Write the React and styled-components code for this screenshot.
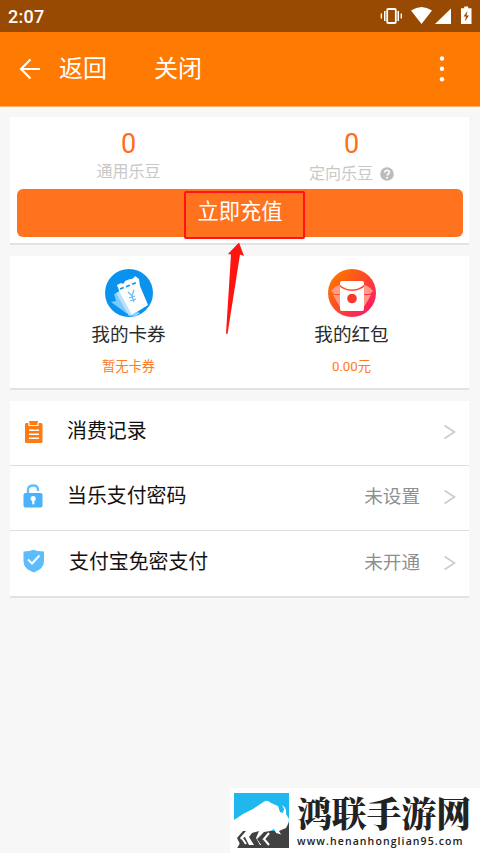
import React from "react";
import styled, { createGlobalStyle } from "styled-components";

const GlobalStyle = createGlobalStyle`
    * {
        box-sizing: border-box;
    }
    body {
        margin: 0;
        background-color: #f7f7f7;
        font-family: Roboto, "Noto Sans CJK SC", sans-serif;
    }
`;

const PageWrapper = styled('div')`
    position: relative;
    width: 480px;
    height: 853px;
    overflow: hidden;
    background-color: #f7f7f7;
`;

const StatusBar = styled('div')`
    display: flex;
    align-items: center;
    justify-content: space-between;
    height: 32px;
    padding: 0 8px;
    color: #fff;
    background-color: #984a02;
    font-size: 18px;
    font-weight: 500;
    letter-spacing: 0.3px;
`;

const StatusIcons = styled('svg')`
    display: block;
    margin-right: -8px;
`;

const Header = styled('header')`
    display: flex;
    align-items: center;
    height: 75px;
    padding: 0 30px 0 19px;
    color: #fff;
    background-color: #ff7a00;
    border-bottom: 1px solid #ffb066;
`;

const HeaderLink = styled('span')`
    font-size: 24px;
    line-height: 36px;
    margin-left: ${props => props.$gap}px;
`;

const MoreIcon = styled('svg')`
    margin-left: auto;
`;

const Content = styled('main')`
    display: flex;
    flex-direction: column;
    gap: 11px;
    padding: 10px 11px 0 10px;
`;

const Card = styled('section')`
    background-color: #fff;
    border-bottom: 2px solid #e2e2e2;
`;

const BalanceCard = styled(Card)`
    height: 128px;
    padding: 0 6px 0 7px;
`;

const Columns = styled('div')`
    display: grid;
    grid-template-columns: 1fr 1fr;
`;

const Balance = styled('div')`
    display: flex;
    flex-direction: column;
    align-items: center;
    height: 72px;
    padding-top: 11px;
`;

const BalanceValue = styled('span')`
    color: #ff6d1b;
    font-size: 27px;
    line-height: 32px;
`;

const BalanceLabel = styled('span')`
    display: flex;
    align-items: center;
    gap: 7px;
    margin-top: ${props => props.$offset || 0}px;
    color: #c8c8c8;
    font-size: 16px;
    line-height: 24px;
`;

const RechargeButton = styled('button')`
    position: relative;
    display: block;
    width: 100%;
    height: 48px;
    padding: 0 0 2px;
    border: unset;
    border-radius: 6px;
    color: #fff;
    background-color: #ff731f;
    font-family: inherit;
    font-size: 21.3px;
    line-height: 46px;
`;

const HighlightBox = styled('span')`
    position: absolute;
    left: 167px;
    top: 2px;
    width: 121px;
    height: 48px;
    border: 2px solid #ff1313;
    border-radius: 2px;
`;

const HighlightArrow = styled('svg')`
    position: absolute;
    left: 222px;
    top: 240px;
`;

const AssetCard = styled(Card)`
    height: 134px;
    padding: 0 6px 0 7px;
`;

const Asset = styled('div')`
    display: flex;
    flex-direction: column;
    align-items: center;
    padding-top: 13px;
`;

const AssetName = styled('span')`
    margin-top: 4px;
    color: #2b2b2b;
    font-size: 18.6px;
    line-height: 28px;
`;

const AssetValue = styled('span')`
    margin-top: 8px;
    color: #ff7a22;
    font-size: 13.3px;
    line-height: 20px;
`;

const Row = styled('div')`
    display: flex;
    align-items: center;
    height: 65px;
    padding: 0 13px 2px 12px;
    border-bottom: ${props => props.$last ? "0" : "1px solid #dedede"};
`;

const RowIcon = styled('svg')`
    flex: none;
    margin-top: ${props => props.$shift || 0}px;
`;

const RowTitle = styled('span')`
    margin-left: ${props => props.$gap}px;
    color: #111;
    font-size: 19.9px;
    line-height: 30px;
`;

const RowStatus = styled('span')`
    margin-left: auto;
    margin-right: 23px;
    color: #8f8f8f;
    font-size: 18.6px;
    line-height: 28px;
`;

const Chevron = styled('svg')`
    flex: none;
    margin-left: ${props => props.$push ? "auto" : "0"};
`;

const Watermark = styled('div')`
    position: absolute;
    right: 0;
    bottom: 0;
    display: flex;
    width: 250px;
    height: 65px;
    padding: 5px 0 0 4px;
    background-color: #fff;
`;

const WatermarkText = styled('div')`
    display: flex;
    flex-direction: column;
    margin-left: 8px;
    color: #222;
    white-space: nowrap;
`;

const WatermarkName = styled('span')`
    font-family: "Noto Serif CJK SC", "Noto Sans CJK SC", serif;
    font-size: 34.8px;
    font-weight: 900;
    line-height: 40px;
    margin-top: -1px;
`;

const WatermarkUrl = styled('span')`
    font-family: "Open Sans", sans-serif;
    font-size: 10.5px;
    font-weight: 600;
    line-height: 14px;
    letter-spacing: 1.1px;
    margin-top: 2px;
`;

const PhoneStatusIcons = () => (
    <StatusIcons width="104" height="32" viewBox="376 0 104 32" fill="#fff">
        <rect x="387.2" y="9" width="8.6" height="14" rx="1" fill="none" stroke="#fff" strokeWidth="1.8" />
        <path d="M384 11h1.5v10H384zM397.5 11h1.5v10h-1.5zM380.7 13.5h1.4v5h-1.4zM400.6 13.5h1.4v5h-1.4z" />
        <path d="M411 10.5Q421.500 3.500 432 10.500L421.500 24Z" />
        <path d="M451 8.500V24H435Z" />
        <path d="M464.200 6.500h4v1.800h3.300V24h-10.500V8.300h3.200z" />
        <path d="M467.500 11l-4 5.500h2.500l-1.200 5 4.200-6h-2.500z" fill="#984a02" />
    </StatusIcons>
);

const HelpIcon = () => (
    <svg width="14" height="14" viewBox="0 0 14 14">
        <circle cx="7" cy="7" r="6.800" fill="#bcbcbc" />
        <path d="M4.700 5.500C4.700 2.500 9.500 2.700 9.300 5.500 9.200 7 7.100 7 7.100 8.600" fill="none" stroke="#fff" strokeWidth="1.600" />
        <circle cx="7.100" cy="10.700" r="1" fill="#fff" />
    </svg>
);

const CouponIcon = () => (
    <svg width="48" height="48" viewBox="0 0 48 48">
        <circle cx="24" cy="24" r="24" fill="#0992ee" />
        <path d="M6 33l5-1-2-7 6-2-1-6 5 3 9 27-7-3z" fill="#7dcaff" />
        <path d="M11 24l7-4 10 26-4 1z" fill="#b7e1ff" />
        <path d="M12 16l4-2q3 2 4-2l5-2q3 1 5-3l4 3 1 7 8 19-16 10-12-22z" fill="#fff" />
        <path d="M15 20l18-7" stroke="#0992ee" strokeWidth="1.600" strokeDasharray="4 2.500" />
        <path d="M23 23l4 4 2-6M27 27l2 6M24 29l6-2M25 32l6-2" fill="none" stroke="#62bdf6" strokeWidth="1.200" />
        <path d="M27 46l5-3 3 1-5 4z" fill="#8fd0ff" />
    </svg>
);

const RedPacketIcon = () => (
    <svg width="48" height="48" viewBox="0 0 48 48">
        <defs>
            <linearGradient id="packet" x1="0.100" y1="0.200" x2="0.850" y2="0.850">
                <stop offset="0" stopColor="#ff7200" />
                <stop offset="0.500" stopColor="#fa4a2a" />
                <stop offset="1" stopColor="#ff1d5e" />
            </linearGradient>
        </defs>
        <circle cx="24" cy="24" r="24" fill="url(#packet)" />
        <path d="M3 22q4-5 9-6v9H6zM45 22q-4-5-9-6v9h6zM5 26h7v12zM43 26h-7v12z" fill="#ff9a86" />
        <path d="M12 14q0-2 2-2h20q2 0 2 2v2q-12 9-24 0z" fill="#fff" />
        <path d="M12 18q12 8 24 0v22q0 2-2 2H14q-2 0-2-2z" fill="#fff" />
        <circle cx="24" cy="29.500" r="4.800" fill="#f8382f" />
    </svg>
);

const RecordIcon = () => (
    <RowIcon width="22" height="24" viewBox="0 0 22 24">
        <path d="M4 3h3V1h9v2h3q1.500 0 1.500 1.500V21.500q0 1.500-1.500 1.500H4q-1 0-1-1.500V4.500Q3 3 4 3z" fill="#ff7a10" />
        <path d="M7 2.500v3h9v-3" fill="none" stroke="#fff" strokeWidth="1.200" />
        <path d="M7 10.200h10M7 14.300h10M7 18.300h10" stroke="#fff" strokeWidth="1.600" />
    </RowIcon>
);

const LockIcon = () => (
    <RowIcon width="22" height="24" viewBox="0 0 22 24" $shift={-3}>
        <path d="M6 10V5.500Q6 1.500 11.500 1.500 16 1.500 16 6v1" fill="none" stroke="#62bffb" strokeWidth="2.400" />
        <rect x="1.500" y="9" width="19" height="14.500" rx="2" fill="#49b2fb" />
        <circle cx="11.200" cy="14.500" r="2.600" fill="#fff" />
        <rect x="10.200" y="15" width="2.200" height="5.500" rx="1" fill="#fff" />
    </RowIcon>
);

const ShieldIcon = () => (
    <RowIcon width="22" height="24" viewBox="0 0 22 24" $shift={-4}>
        <path d="M1.500 2.500Q8 2.500 11.700 0.800 15 2.500 22 2.500V12q0 8-10.200 11.500Q1.500 20 1.500 12z" fill="#5dbcfc" />
        <path d="M6 10.500l4 4 7.500-8" fill="none" stroke="#fff" strokeWidth="2" />
    </RowIcon>
);

const ChevronIcon = ({push}) => (
    <Chevron width="13" height="16" viewBox="0 0 13 16" $push={push}>
        <path d="M1.500 1.500L11.500 8 1.500 14.500" fill="none" stroke="#ccc" strokeWidth="1.700" />
    </Chevron>
);

const BisonLogo = () => (
    <svg width="55" height="55" viewBox="0 0 55 55">
        <rect width="55" height="55" fill="#20b6ee" />
        <path d="M0 38h55v17H0z" fill="#414141" />
        <path d="M0 27l9-6 10-5 12-8q3-1 6 2l7 3 2 6 3 1 1-4-2-4q5 3 4 9l3 5-1 8-3 4-2 4-7-2-2-4-4 2-6 1-2 6 3 7h-5l-4-7 3-7-7 2-3 4 5 8h-5l-4-8-3 1-3 7-3 5-2-2z" fill="#fff" />
        <path d="M45 38l7-3 3-6v26H36l-3-7 4-8 3-2 5 5h3z" fill="#414141" />
        <path d="M9 38l-6 7 3 6h4l-4-6 6-7zM30 39l-7 7 5 7h5l-5-7 7-7z" fill="#414141" />
        <path d="M12 40l-4 5 4 6M35 40l-5 6 5 6" fill="none" stroke="#fff" strokeWidth="2" />
    </svg>
);

const rows = [
    {title: "消费记录", gap: 33, icon: <RecordIcon />},
    {title: "当乐支付密码", gap: 33, icon: <LockIcon />, status: "未设置"},
    {title: "支付宝免密支付", gap: 35, icon: <ShieldIcon />, status: "未开通"},
];

const App = () => (
    <PageWrapper>
        <GlobalStyle />
        <StatusBar>
            <span>2:07</span>
            <PhoneStatusIcons />
        </StatusBar>
        <Header>
            <svg width="22" height="22" viewBox="0 0 22 22" fill="none" stroke="#fff" strokeWidth="2.200">
                <path d="M21 11H2M11.500 1.500L2 11l9.500 9.500" />
            </svg>
            <HeaderLink $gap={18}>返回</HeaderLink>
            <HeaderLink $gap={47}>关闭</HeaderLink>
            <MoreIcon width="16" height="26" viewBox="0 0 16 26" fill="#fff">
                <circle cx="8" cy="2.500" r="2.200" />
                <circle cx="8" cy="12.800" r="2.200" />
                <circle cx="8" cy="23.300" r="2.200" />
            </MoreIcon>
        </Header>
        <Content>
            <BalanceCard>
                <Columns>
                    <Balance>
                        <BalanceValue>0</BalanceValue>
                        <BalanceLabel>通用乐豆</BalanceLabel>
                    </Balance>
                    <Balance>
                        <BalanceValue>0</BalanceValue>
                        <BalanceLabel $offset={2}>定向乐豆 <HelpIcon /></BalanceLabel>
                    </Balance>
                </Columns>
                <RechargeButton>
                    立即充值
                    <HighlightBox />
                </RechargeButton>
            </BalanceCard>
            <AssetCard>
                <Columns>
                    <Asset>
                        <CouponIcon />
                        <AssetName>我的卡券</AssetName>
                        <AssetValue>暂无卡券</AssetValue>
                    </Asset>
                    <Asset>
                        <RedPacketIcon />
                        <AssetName>我的红包</AssetName>
                        <AssetValue>0.00元</AssetValue>
                    </Asset>
                </Columns>
            </AssetCard>
            <Card>
                {rows.map((row, i) => (
                    <Row key={row.title} $last={i === rows.length - 1}>
                        {row.icon}
                        <RowTitle $gap={row.gap - 10}>{row.title}</RowTitle>
                        {row.status && <RowStatus>{row.status}</RowStatus>}
                        <ChevronIcon push={!row.status} />
                    </Row>
                ))}
            </Card>
        </Content>
        <HighlightArrow width="26" height="96" viewBox="0 0 26 96">
            <path d="M17 2.500L22 16l-4-1.500L5.500 94 4 93.500 9 14.500 6 14z" fill="#ff150f" />
        </HighlightArrow>
        <Watermark>
            <BisonLogo />
            <WatermarkText>
                <WatermarkName>鸿联手游网</WatermarkName>
                <WatermarkUrl>www.henanhonglian95.com</WatermarkUrl>
            </WatermarkText>
        </Watermark>
    </PageWrapper>
);

export default App;
